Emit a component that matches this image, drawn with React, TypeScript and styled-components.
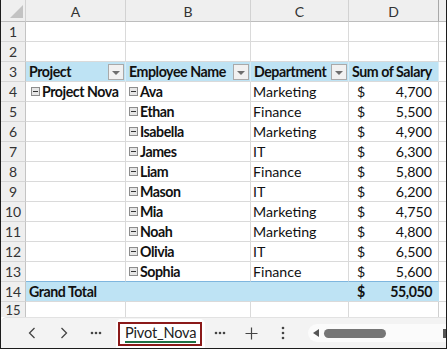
import React from 'react';
import styled, { createGlobalStyle } from 'styled-components';

const GlobalStyle = createGlobalStyle`
  html, body {
    margin: 0;
    padding: 0;
    background: #ffffff;
  }
  body {
    font-family: Lato, "Liberation Sans", sans-serif;
  }
`;

const Frame = styled.div`
  width: 447px;
  height: 349px;
  box-sizing: border-box;
  border: 1px solid #1c1c1c;
  border-top: none;
  display: flex;
  flex-direction: column;
  overflow: hidden;
  background: #ffffff;
`;

const Sheet = styled.div`
  display: grid;
  grid-template-columns: 25px 100px 125px 98px 90px 1fr;
  grid-template-rows: 22px;
  grid-auto-rows: 20px;
  height: 317px;
  overflow: hidden;
  color: #111;
  font-size: 14.2px;
`;

const Corner = styled.div`
  box-sizing: border-box;
  background: #efefef;
  border-right: 1px solid #d2d2d2;
  border-bottom: 1px solid #bdbdbd;
  display: flex;
  align-items: flex-end;
  justify-content: flex-end;
  padding: 0 2px 3px 0;
`;

const CornerMark = styled.div`
  width: 13px;
  height: 13px;
  background: #c3c3c3;
  clip-path: polygon(100% 0, 100% 100%, 0 100%);
`;

const ColHead = styled.div<{ $edge?: boolean }>`
  box-sizing: border-box;
  background: #efefef;
  border-right: 1px solid ${p => (p.$edge ? '#a8a8a8' : '#d2d2d2')};
  border-bottom: 1px solid #bdbdbd;
  display: flex;
  align-items: center;
  justify-content: center;
  color: #333;
  font-size: 14px;
  padding-top: 1px;
`;

const RowHead = styled.div<{ $cut?: boolean }>`
  box-sizing: border-box;
  background: #efefef;
  border-right: 1px solid #c4c4c4;
  border-bottom: 1px solid #d6d6d6;
  display: flex;
  align-items: ${p => (p.$cut ? 'flex-start' : 'center')};
  justify-content: center;
  color: #333;
  font-size: ${p => (p.$cut ? 13 : 14)}px;
  line-height: 16px;
`;

type Tone = 'plain' | 'head' | 'total';

const Cell = styled.div<{ $tone?: Tone; $blueTop?: boolean; $pad?: number; $edge?: boolean }>`
  box-sizing: border-box;
  position: relative;
  display: flex;
  align-items: center;
  padding-left: ${p => p.$pad ?? 3}px;
  padding-right: 4px;
  white-space: nowrap;
  overflow: hidden;
  background: ${p => (p.$tone === 'head' || p.$tone === 'total' ? '#bee3f4' : '#ffffff')};
  border-right: 1px solid
    ${p =>
      p.$tone === 'total' ? '#bee3f4' : p.$tone === 'head' ? '#d9ecf5' : p.$edge ? '#d0d0d0' : '#dadada'};
  border-bottom: 1px solid ${p => (p.$blueTop ? '#7fb6de' : '#dadada')};
  font-weight: ${p => (p.$tone === 'head' || p.$tone === 'total' ? 700 : 400)};
  letter-spacing: ${p => (p.$tone === 'head' || p.$tone === 'total' ? '-0.45px' : '0')};
`;

const Label = styled.span<{ $bold?: boolean }>`
  font-weight: ${p => (p.$bold ? 700 : 'inherit')};
  letter-spacing: ${p => (p.$bold ? '-0.45px' : 'inherit')};
`;

const DropButton = styled.div`
  position: absolute;
  right: 1px;
  top: 2px;
  width: 16px;
  height: 16px;
  box-sizing: border-box;
  border: 1px solid #a9a9a9;
  background: #f1f1f1;
  display: flex;
  align-items: center;
  justify-content: center;
`;

const DropArrow = styled.div`
  width: 0;
  height: 0;
  border-left: 4px solid transparent;
  border-right: 4px solid transparent;
  border-top: 4px solid #6e6e6e;
  margin-top: 1px;
`;

const Collapse = styled.div<{ $gap: number }>`
  width: 9px;
  height: 9px;
  box-sizing: border-box;
  border: 1px solid #8c8c8c;
  background: #e6e6e6;
  margin-left: ${p => p.$gap}px;
  margin-right: 2px;
  display: flex;
  align-items: center;
  justify-content: center;
  flex-shrink: 0;
  &::after {
    content: '';
    width: 5px;
    height: 1px;
    background: #333;
  }
`;

const Money = styled.div`
  display: flex;
  justify-content: space-between;
  width: 100%;
  padding-left: 5px;
  padding-right: 2px;
`;

const TabBar = styled.div`
  height: 31px;
  background: #f3f3f3;
  border-top: 1px solid #e2e2e2;
  border-top-left-radius: 6px;
  display: flex;
  align-items: center;
  box-sizing: border-box;
  position: relative;
`;

const NavButton = styled.div<{ $w: number }>`
  width: ${p => p.$w}px;
  height: 100%;
  display: flex;
  align-items: center;
  justify-content: center;
  color: #444;
  flex-shrink: 0;
`;

const Tab = styled.div`
  height: 30px;
  margin-top: 1px;
  padding: 0 3px 0 2px;
  background: #ffffff;
  border-radius: 5px 5px 0 0;
  display: flex;
  align-items: center;
  flex-shrink: 0;
`;

const TabInner = styled.div`
  box-sizing: border-box;
  height: 24px;
  border: 2px solid #8b1a1a;
  padding: 0 4px 3px 5px;
  display: flex;
  align-items: center;
  position: relative;
  font-size: 14.6px;
  letter-spacing: -0.2px;
  color: #222;
  &::after {
    content: '';
    position: absolute;
    left: 5px;
    right: 4px;
    bottom: 1px;
    height: 2px;
    background: #1e7145;
  }
`;

const ScrollTrack = styled.div`
  flex: 1;
  height: 18px;
  margin-left: 9px;
  margin-right: -10px;
  background: #fbfbfb;
  border-radius: 9px;
  display: flex;
  align-items: center;
  padding-left: 5px;
  gap: 5px;
`;

const ScrollArrow = styled.div`
  width: 0;
  height: 0;
  border-top: 4px solid transparent;
  border-bottom: 4px solid transparent;
  border-right: 6px solid #555;
`;

const ScrollThumb = styled.div`
  width: 62px;
  height: 9px;
  border-radius: 5px;
  background: #767676;
`;

const RightEnd = styled.div`
  position: absolute;
  right: 0;
  top: 11px;
  width: 3px;
  height: 9px;
  background: #555;
`;

const Dots = () => (
  <svg width="12" height="4" viewBox="0 0 12 4">
    <circle cx="2" cy="2" r="1.3" fill="#444" />
    <circle cx="6" cy="2" r="1.3" fill="#444" />
    <circle cx="10" cy="2" r="1.3" fill="#444" />
  </svg>
);

const employees = [
  { name: 'Ava', dept: 'Marketing', pay: '4,700' },
  { name: 'Ethan', dept: 'Finance', pay: '5,500' },
  { name: 'Isabella', dept: 'Marketing', pay: '4,900' },
  { name: 'James', dept: 'IT', pay: '6,300' },
  { name: 'Liam', dept: 'Finance', pay: '5,800' },
  { name: 'Mason', dept: 'IT', pay: '6,200' },
  { name: 'Mia', dept: 'Marketing', pay: '4,750' },
  { name: 'Noah', dept: 'Marketing', pay: '4,800' },
  { name: 'Olivia', dept: 'IT', pay: '6,500' },
  { name: 'Sophia', dept: 'Finance', pay: '5,600' },
];

const EmptyRow: React.FC<{ n: number; cut?: boolean }> = ({ n, cut }) => (
  <>
    <RowHead $cut={cut}>{n}</RowHead>
    <Cell />
    <Cell />
    <Cell />
    <Cell $edge />
    <Cell />
  </>
);

export default function App() {
  return (
    <>
      <GlobalStyle />
      <Frame>
        <Sheet>
          <Corner>
            <CornerMark />
          </Corner>
          <ColHead>A</ColHead>
          <ColHead>B</ColHead>
          <ColHead>C</ColHead>
          <ColHead $edge>D</ColHead>
          <ColHead />

          <EmptyRow n={1} />
          <EmptyRow n={2} />

          <RowHead>3</RowHead>
          <Cell $tone="head">
            Project
            <DropButton>
              <DropArrow />
            </DropButton>
          </Cell>
          <Cell $tone="head">
            Employee Name
            <DropButton>
              <DropArrow />
            </DropButton>
          </Cell>
          <Cell $tone="head">
            Department
            <DropButton>
              <DropArrow />
            </DropButton>
          </Cell>
          <Cell $tone="head">Sum of Salary</Cell>
          <Cell />

          {employees.map((e, i) => {
            const last = i === employees.length - 1;
            return (
              <React.Fragment key={e.name}>
                <RowHead>{i + 4}</RowHead>
                <Cell $pad={0} $blueTop={last}>
                  {i === 0 && (
                    <>
                      <Collapse $gap={5} />
                      <Label $bold>Project Nova</Label>
                    </>
                  )}
                </Cell>
                <Cell $pad={0} $blueTop={last}>
                  <Collapse $gap={3} />
                  <Label $bold>{e.name}</Label>
                </Cell>
                <Cell $pad={2} $blueTop={last}>
                  {e.dept}
                </Cell>
                <Cell $pad={3} $blueTop={last} $edge>
                  <Money>
                    <span>$</span>
                    <span>{e.pay}</span>
                  </Money>
                </Cell>
                <Cell />
              </React.Fragment>
            );
          })}

          <RowHead>14</RowHead>
          <Cell $tone="total">Grand Total</Cell>
          <Cell $tone="total" />
          <Cell $tone="total" />
          <Cell $tone="total" $pad={3}>
            <Money>
              <span>$</span>
              <span>55,050</span>
            </Money>
          </Cell>
          <Cell />

          <EmptyRow n={15} cut />
        </Sheet>

        <TabBar>
          <NavButton $w={15} />
          <NavButton $w={32}>
            <svg width="8" height="12" viewBox="0 0 8 12">
              <polyline points="6.5,1 1.5,6 6.5,11" fill="none" stroke="#444" strokeWidth="1.3" />
            </svg>
          </NavButton>
          <NavButton $w={32}>
            <svg width="8" height="12" viewBox="0 0 8 12">
              <polyline points="1.5,1 6.5,6 1.5,11" fill="none" stroke="#444" strokeWidth="1.3" />
            </svg>
          </NavButton>
          <NavButton $w={32}>
            <Dots />
          </NavButton>
          <NavButton $w={4} />
          <Tab>
            <TabInner>Pivot_Nova</TabInner>
          </Tab>
          <NavButton $w={30}>
            <Dots />
          </NavButton>
          <NavButton $w={32}>
            <svg width="13" height="13" viewBox="0 0 13 13">
              <path d="M6.5 0.5v12M0.5 6.5h12" stroke="#444" strokeWidth="1.2" fill="none" />
            </svg>
          </NavButton>
          <NavButton $w={32}>
            <svg width="4" height="14" viewBox="0 0 4 14">
              <circle cx="2" cy="2" r="1.3" fill="#444" />
              <circle cx="2" cy="7" r="1.3" fill="#444" />
              <circle cx="2" cy="12" r="1.3" fill="#444" />
            </svg>
          </NavButton>
          <ScrollTrack>
            <ScrollArrow />
            <ScrollThumb />
          </ScrollTrack>
          <RightEnd />
        </TabBar>
      </Frame>
    </>
  );
}
